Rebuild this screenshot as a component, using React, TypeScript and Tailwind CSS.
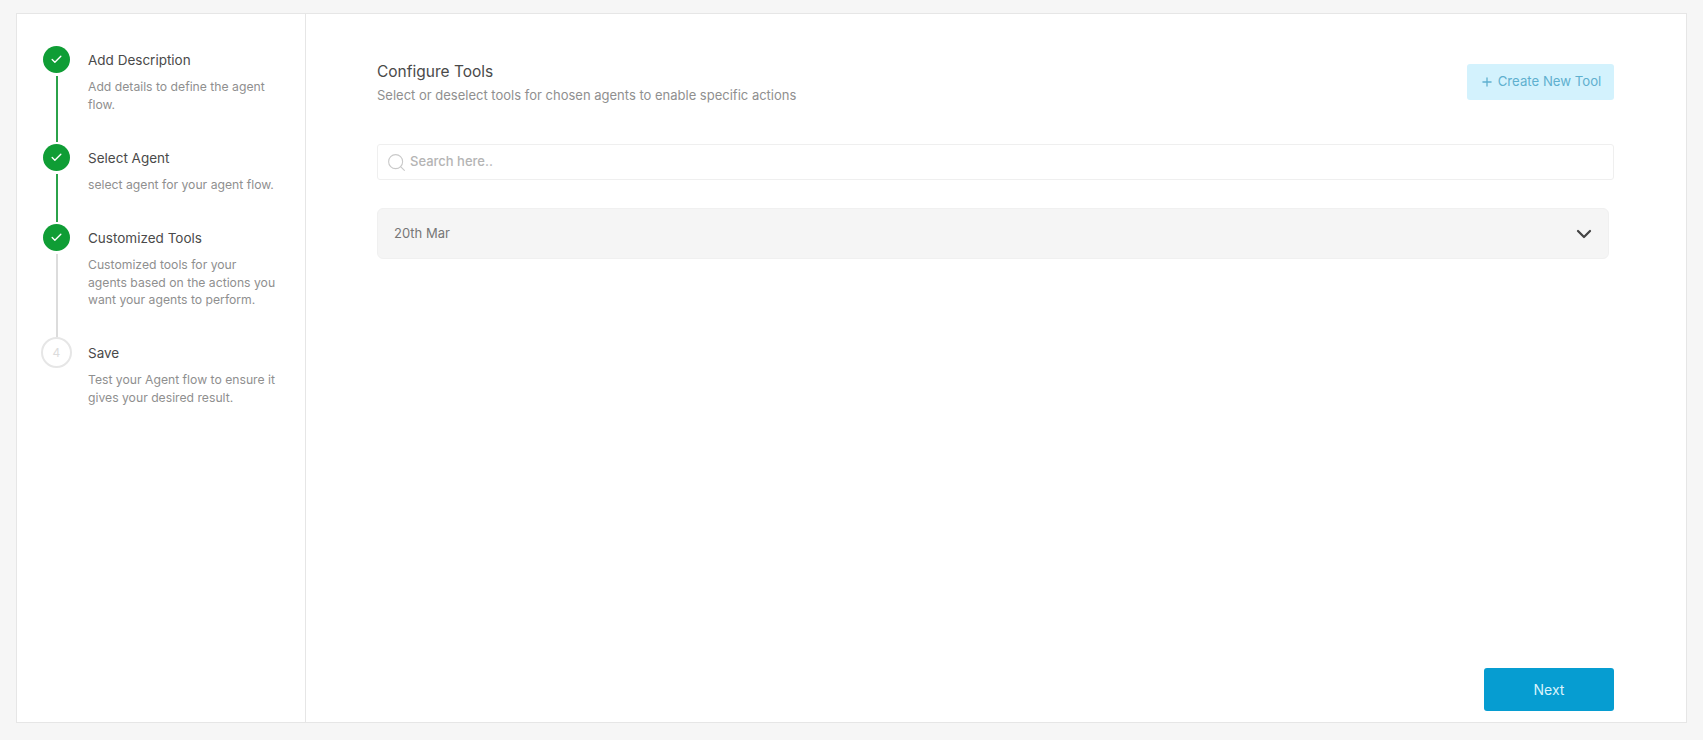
import { Check, ChevronDown, Plus, Search } from 'lucide-react'

interface Step {
  title: string
  lines: string[]
  done: boolean
  lineDone?: boolean
  rowClass: string
}

const steps: Step[] = [
  { title: 'Add Description', lines: ['Add details to define the agent', 'flow.'], done: true, lineDone: true, rowClass: 'h-[98px]' },
  { title: 'Select Agent', lines: ['select agent for your agent flow.'], done: true, lineDone: true, rowClass: 'h-[80px]' },
  {
    title: 'Customized Tools',
    lines: ['Customized tools for your', 'agents based on the actions you', 'want your agents to perform.'],
    done: true,
    rowClass: 'h-[115px]',
  },
  { title: 'Save', lines: ['Test your Agent flow to ensure it', 'gives your desired result.'], done: false, rowClass: 'h-[80px]' },
]

function StepRow({ step, index, last }: { step: Step; index: number; last: boolean }) {
  return (
    <div className={`flex ${step.rowClass}`}>
      <div className="flex w-[31px] flex-col items-center">
        {step.done ? (
          <div className="mt-[2px] flex h-[27px] w-[27px] shrink-0 items-center justify-center rounded-full bg-[#0f9d35]">
            <Check className="h-[13px] w-[13px] text-white" strokeWidth={2.5} />
          </div>
        ) : (
          <div className="flex h-[31px] w-[31px] shrink-0 items-center justify-center rounded-full border-2 border-[#e6e6e6] text-[12px] text-[#dcdcdc]">
            {index + 1}
          </div>
        )}
        {!last && (
          <div className={`mt-[3px] w-[2px] flex-1 ${step.lineDone ? 'bg-[#2ba24a]' : 'bg-[#dcdcdc]'}`} />
        )}
      </div>
      <div className="ml-4 pt-[6px]">
        <div className="text-[13.5px] leading-[20px] text-[#4a4a4a]">{step.title}</div>
        <div className="mt-[8px] text-[12.2px] leading-[17.5px] text-[#8f8f8f]">
          {step.lines.map((line) => (
            <div key={line} className="whitespace-nowrap">{line}</div>
          ))}
        </div>
      </div>
    </div>
  )
}

export default function App() {
  return (
    <div
      className="h-[740px] bg-[#f6f6f6] pb-[17px] pl-[16px] pr-[16px] pt-[13px]"
      style={{ fontFamily: 'Inter, "Liberation Sans", sans-serif' }}
    >
      <div className="flex h-full border border-[#e6e6e6] bg-white">
        {/* Stepper */}
        <div className="w-[289px] shrink-0 border-r border-[#e6e6e6] pl-[24px] pt-[30px]">
          {steps.map((step, i) => (
            <StepRow key={step.title} step={step} index={i} last={i === steps.length - 1} />
          ))}
        </div>

        {/* Main */}
        <div className="flex flex-1 flex-col pb-[11px] pl-[71px] pr-[72px] pt-[47px]">
          <div className="flex items-start justify-between">
            <div>
              <h1 className="text-[15.5px] font-normal leading-[22px] text-[#4a4a4a]">Configure Tools</h1>
              <p className="mt-[2px] text-[13px] leading-[20px] text-[#8f8f8f]">
                Select or deselect tools for chosen agents to enable specific actions
              </p>
            </div>
            <button className="mt-[3px] flex h-[36px] w-[147px] items-center justify-center gap-1 rounded-[3px] bg-[#d3f2fd] text-[13.2px] text-[#5fb0cf]">
              <Plus className="h-[14px] w-[14px]" strokeWidth={2.25} />
              Create New Tool
            </button>
          </div>

          <div className="mt-[39px] flex h-[36px] items-center rounded-[3px] border border-[#efefef] pl-[8px]">
            <Search className="h-[21px] w-[21px] text-[#c9c9c9]" strokeWidth={1.25} />
            <span className="ml-[3px] text-[13px] font-medium text-[#b4b4b4]">Search here..</span>
          </div>

          <div className="mr-[5px] mt-[28px] flex h-[51px] items-center justify-between rounded-[6px] border border-[#f0f0f0] bg-[#f5f5f5] pl-[16px] pr-[12px]">
            <span className="text-[13px] text-[#777777]">20th Mar</span>
            <ChevronDown className="h-[24px] w-[24px] text-[#444444]" strokeWidth={2.25} />
          </div>

          <div className="mt-auto flex justify-end">
            <button className="h-[43px] w-[130px] rounded-[3px] bg-[#069dd1] text-[14px] text-[#d9f3fc]">Next</button>
          </div>
        </div>
      </div>
    </div>
  )
}
